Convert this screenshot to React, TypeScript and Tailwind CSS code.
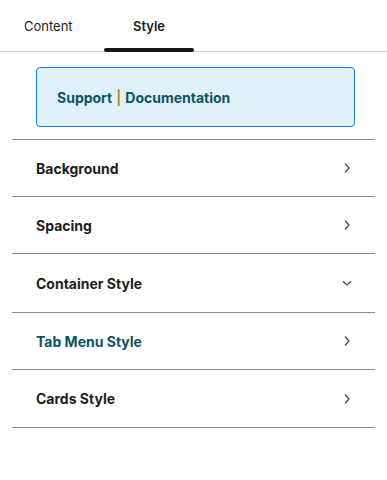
import { useState } from "react";

type Section = {
  label: string;
  h: string;
  open?: boolean;
  active?: boolean;
};

const sections: Section[] = [
  { label: "Background", h: "h-[57px]" },
  { label: "Spacing", h: "h-[57px]" },
  { label: "Container Style", h: "h-[59px]", open: true },
  { label: "Tab Menu Style", h: "h-[57px]", active: true },
  { label: "Cards Style", h: "h-[58px]" },
];

function Chevron({ down }: { down?: boolean }) {
  return (
    <svg width="12" height="12" viewBox="0 0 12 12" className="text-[#444]">
      {down ? (
        <path d="M2 4.5 L6 8 L10 4.5" fill="none" stroke="currentColor" strokeWidth="1.2" />
      ) : (
        <path d="M4 1.5 L8 6 L4 10.5" fill="none" stroke="currentColor" strokeWidth="1.2" />
      )}
    </svg>
  );
}

export default function App() {
  const [tab, setTab] = useState("style");

  return (
    <div className="w-[387px] h-[480px] bg-white font-['Inter',sans-serif] text-[#1d1d1d]">
      {/* tabs */}
      <div className="flex h-[52px] border-b border-[#d0d0d0]">
        <button
          onClick={() => setTab("content")}
          className="w-[104px] pl-6 text-left text-[13px] pt-[2px]"
        >
          Content
        </button>
        <button
          onClick={() => setTab("style")}
          className="relative w-[90px] text-[13px] font-semibold pt-[2px]"
        >
          Style
          {tab === "style" && (
            <span className="absolute left-0 right-0 bottom-[-1px] h-[4px] rounded-full bg-[#161616]" />
          )}
        </button>
      </div>

      <div className="px-[36px] pt-[15px] pb-[12px] pr-[32px]">
        <div className="h-[60px] flex items-center px-[20px] rounded-[4px] border border-[#1a7be6] bg-[#e1f1fa] text-[14px] font-bold text-[#0c5460]">
          Support <span className="mx-[4px] text-[#b8801c] font-semibold">|</span> Documentation
        </div>
      </div>

      <div className="mx-3 border-t border-[#888]">
        {sections.map((s) => (
          <div
            key={s.label}
            className={`flex items-center justify-between pl-6 pr-[22px] border-b border-[#888] ${s.h}`}
          >
            <span
              className={`text-[14px] font-bold ${
                s.active ? "text-[#0c5460]" : "text-[#1d1d1d]"
              }`}
            >
              {s.label}
            </span>
            <Chevron down={s.open} />
          </div>
        ))}
      </div>
    </div>
  );
}
